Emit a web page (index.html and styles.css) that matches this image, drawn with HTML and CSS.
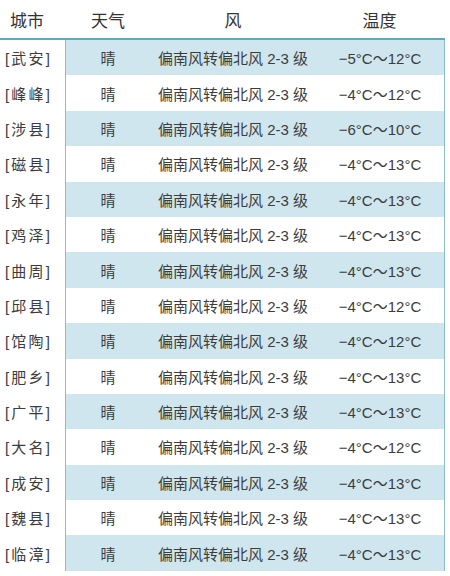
FILE: index.html
```html
<!DOCTYPE html>
<html lang="zh">
<head>
<meta charset="utf-8">
<link rel="stylesheet" href="styles.css">
</head>
<body>
<div class="table">
  <div class="head">
    <div class="hc city">城市</div>
    <div class="hc">天气</div>
    <div class="hc">风</div>
    <div class="hc temp">温度</div>
  </div>
  <div class="rows">
    <div class="row"><div class="c city">[武安]</div><div class="c">晴</div><div class="c wind">偏南风转偏北风 2-3 级</div><div class="c temp">−5°C～12°C</div></div>
    <div class="row"><div class="c city">[峰峰]</div><div class="c">晴</div><div class="c wind">偏南风转偏北风 2-3 级</div><div class="c temp">−4°C～12°C</div></div>
    <div class="row"><div class="c city">[涉县]</div><div class="c">晴</div><div class="c wind">偏南风转偏北风 2-3 级</div><div class="c temp">−6°C～10°C</div></div>
    <div class="row"><div class="c city">[磁县]</div><div class="c">晴</div><div class="c wind">偏南风转偏北风 2-3 级</div><div class="c temp">−4°C～13°C</div></div>
    <div class="row"><div class="c city">[永年]</div><div class="c">晴</div><div class="c wind">偏南风转偏北风 2-3 级</div><div class="c temp">−4°C～13°C</div></div>
    <div class="row"><div class="c city">[鸡泽]</div><div class="c">晴</div><div class="c wind">偏南风转偏北风 2-3 级</div><div class="c temp">−4°C～13°C</div></div>
    <div class="row"><div class="c city">[曲周]</div><div class="c">晴</div><div class="c wind">偏南风转偏北风 2-3 级</div><div class="c temp">−4°C～13°C</div></div>
    <div class="row"><div class="c city">[邱县]</div><div class="c">晴</div><div class="c wind">偏南风转偏北风 2-3 级</div><div class="c temp">−4°C～12°C</div></div>
    <div class="row"><div class="c city">[馆陶]</div><div class="c">晴</div><div class="c wind">偏南风转偏北风 2-3 级</div><div class="c temp">−4°C～12°C</div></div>
    <div class="row"><div class="c city">[肥乡]</div><div class="c">晴</div><div class="c wind">偏南风转偏北风 2-3 级</div><div class="c temp">−4°C～13°C</div></div>
    <div class="row"><div class="c city">[广平]</div><div class="c">晴</div><div class="c wind">偏南风转偏北风 2-3 级</div><div class="c temp">−4°C～13°C</div></div>
    <div class="row"><div class="c city">[大名]</div><div class="c">晴</div><div class="c wind">偏南风转偏北风 2-3 级</div><div class="c temp">−4°C～12°C</div></div>
    <div class="row"><div class="c city">[成安]</div><div class="c">晴</div><div class="c wind">偏南风转偏北风 2-3 级</div><div class="c temp">−4°C～13°C</div></div>
    <div class="row"><div class="c city">[魏县]</div><div class="c">晴</div><div class="c wind">偏南风转偏北风 2-3 级</div><div class="c temp">−4°C～13°C</div></div>
    <div class="row"><div class="c city">[临漳]</div><div class="c">晴</div><div class="c wind">偏南风转偏北风 2-3 级</div><div class="c temp">−4°C～13°C</div></div>
  </div>
</div>
</body>
</html>
```

FILE: styles.css
```css
html, body {
  margin: 0;
  padding: 0;
  background: #ffffff;
}
body {
  font-family: "Liberation Sans", "Noto Sans CJK SC", sans-serif;
  color: #3c3c3c;
  width: 450px;
  height: 576px;
  overflow: hidden;
}
.table {
  width: 445px;
}
.head {
  display: grid;
  grid-template-columns: 66px 84px 166px 129px;
  height: 38px;
  border-bottom: 2px solid #62a8b8;
  align-items: center;
}
.hc {
  text-align: center;
  font-size: 17px;
  color: #333333;
}
.hc.city {
  text-align: left;
  padding-left: 10px;
}
.hc.temp {
  padding-right: 2px;
}
.rows {
  display: flex;
  flex-direction: column;
}
.row {
  display: grid;
  grid-template-columns: 66px 84px 166px 129px;
  height: 35.4px;
  align-items: stretch;
}
.c {
  display: flex;
  align-items: center;
  justify-content: center;
  font-size: 15px;
  background: #ffffff;
}
.row:nth-child(odd) .c {
  background: #cfe6ee;
}
.row .c.city {
  background: #ffffff;
  justify-content: flex-start;
  padding-left: 5px;
  border-right: 1px solid #8dbdc7;
  letter-spacing: 2.2px;
}
.row .c.temp {
  border-right: 1px solid #8dbdc7;
}
.row:nth-child(odd) .c.city {
  background: #ffffff;
}
.wind {
  white-space: pre;
}
```
